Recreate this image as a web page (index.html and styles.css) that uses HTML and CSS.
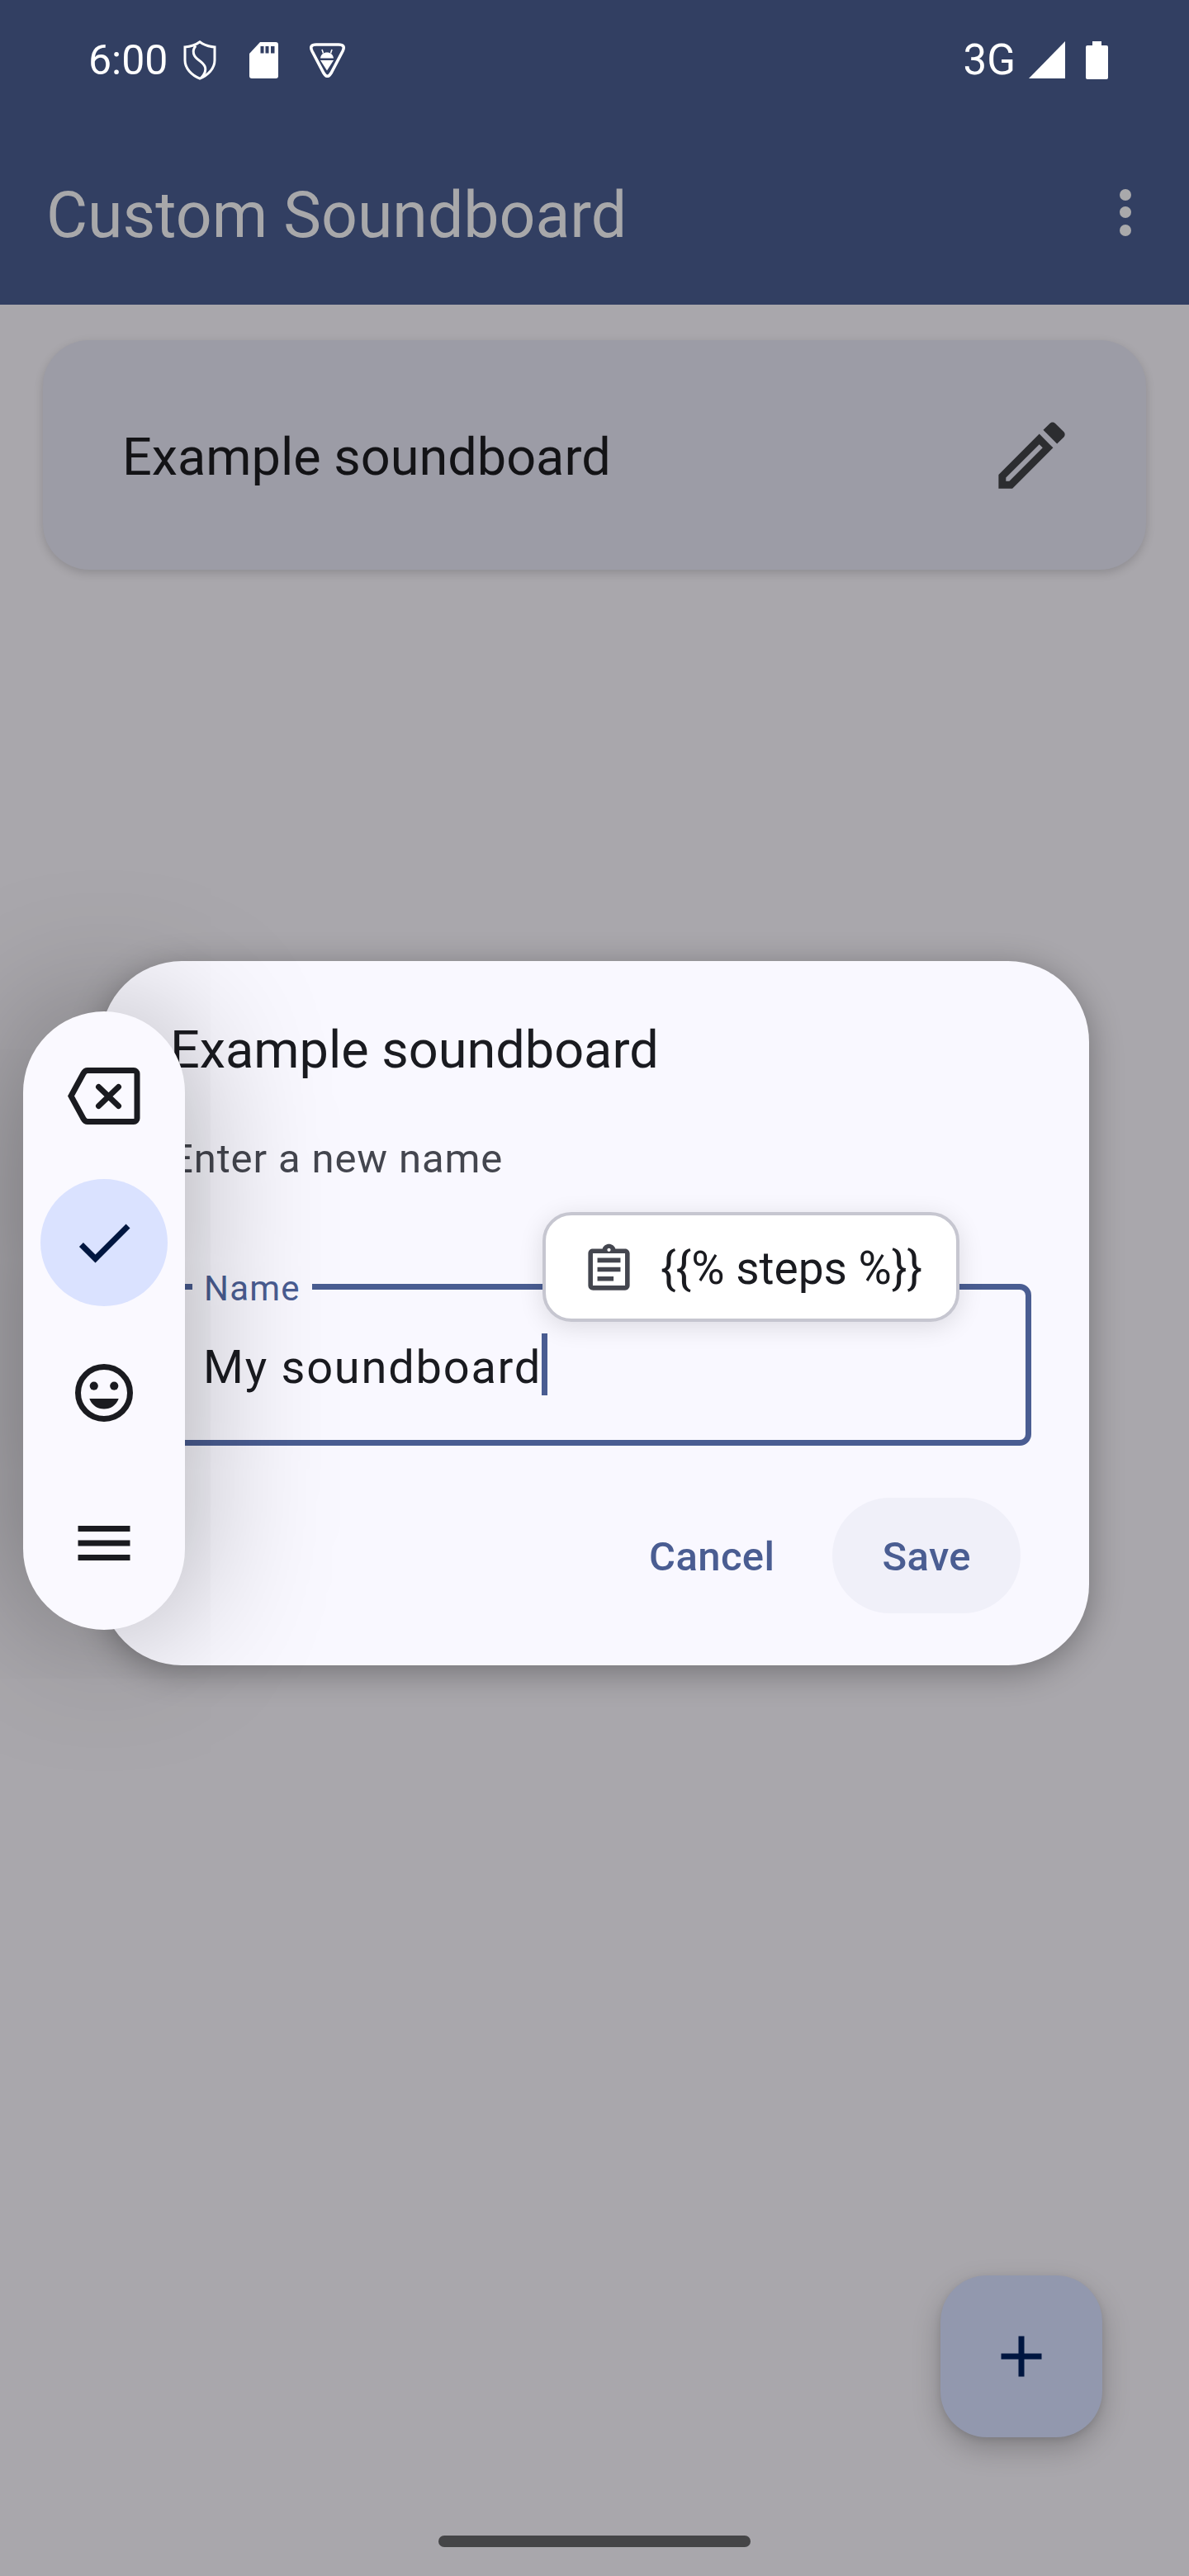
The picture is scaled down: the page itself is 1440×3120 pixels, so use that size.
FILE: index.html
```html
<!DOCTYPE html>
<html lang="en">
<head>
    <meta charset="UTF-8">
    <title>Custom Soundboard</title>
    <link rel="stylesheet" href="styles.css">
</head>
<body>
    <div class="screen">
        <!-- app bar -->
        <header class="appbar">
            <div class="status-bar">
                <span class="status-text">6:00</span>
                <svg class="status-shield" viewBox="0 0 40 48" fill="none" stroke="#fff" stroke-width="3">
                    <path d="M20 1.8 C25 5.5 31 7.5 38 8 V24 C38 34 30 42 20 46.2 C10 42 2 34 2 24 V8 C9 7.5 15 5.5 20 1.8Z"/>
                    <path d="M15 6.5 C10 13 12 19 19 24 C26 29 31 35 22 45"/>
                </svg>
                <svg class="status-sd" viewBox="0 0 35 44">
                    <path fill="#fff" d="M13 0 H32 a3 3 0 0 1 3 3 V41 a3 3 0 0 1 -3 3 H3 a3 3 0 0 1 -3 -3 V14Z"/>
                    <path fill="#323f62" d="M13.5 5 h4 v8.5 h-4z M19.5 5 h4 v8.5 h-4z M26 5 h4.5 v8.5 h-4.5z"/>
                </svg>
                <svg class="status-dev" viewBox="0 0 45 42">
                    <path fill="none" stroke="#fff" stroke-width="3.6" d="M9 2 H36 Q45 2 41 10 L27 36.5 Q22.5 44 18 36.5 L4 10 Q0 2 9 2Z"/>
                    <path fill="#fff" d="M14 18.5 C14.5 14 18 11.5 22 11.5 C26 11.5 29.5 14 30 18.5Z M14 21 H30 L22 33.5Z"/>
                    <path stroke="#fff" stroke-width="1.6" d="M17.5 12.5 L16 8 M26.5 12.5 L28 8"/>
                </svg>
                <span class="status-text status-net">3G</span>
                <svg class="status-signal" viewBox="0 0 44 45"><path fill="#fff" d="M44 0 V45 H0Z"/></svg>
                <svg class="status-battery" viewBox="0 0 27 46"><path fill="#fff" d="M8 0 H19 V5 H25 a2 2 0 0 1 2 2 V44 a2 2 0 0 1 -2 2 H2 a2 2 0 0 1 -2 -2 V7 a2 2 0 0 1 2 -2 H8Z"/></svg>
            </div>
            <div class="toolbar">
                <h1 class="toolbar-title">Custom Soundboard</h1>
                <div class="toolbar-more">
                    <span class="more-dot"></span>
                    <span class="more-dot"></span>
                    <span class="more-dot"></span>
                </div>
            </div>
        </header>

        <!-- soundboard list -->
        <main class="board-list">
            <div class="board-card">
                <span class="board-name">Example soundboard</span>
                <svg class="board-edit" viewBox="0 0 24 24"><path fill="#2c2d30" d="M14.06 9.02l.92.92L5.92 19H5v-.92l9.06-9.06M17.66 3c-.25 0-.51.1-.7.29l-1.83 1.83 3.75 3.75 1.83-1.83c.39-.39.39-1.02 0-1.41l-2.34-2.34c-.2-.2-.45-.29-.71-.29zm-3.6 3.19L3 17.25V21h3.75L17.81 9.94l-3.75-3.75z"/></svg>
            </div>
        </main>

        <button class="fab">
            <svg class="fab-icon" viewBox="0 0 24 24"><path fill="#001640" d="M19 13h-6v6h-2v-6H5v-2h6V5h2v6h6v2z"/></svg>
        </button>

        <!-- rename dialog -->
        <div class="dialog">
            <h2 class="dialog-title">Example soundboard</h2>
            <p class="dialog-text">Enter a new name</p>
            <div class="field">
                <label class="field-label">Name</label>
                <span class="field-value">My soundboard</span><span class="field-cursor"></span>
            </div>
            <div class="dialog-actions">
                <button class="text-button">Cancel</button>
                <button class="text-button text-button-hover">Save</button>
            </div>
        </div>

        <!-- clipboard suggestion -->
        <div class="clip-chip">
            <svg class="clip-icon" viewBox="0 0 24 24"><path fill="#44464f" d="M7 15h7v2H7zm0-4h10v2H7zm0-4h10v2H7zm12-4h-4.18C14.4 1.84 13.3 1 12 1c-1.3 0-2.4.84-2.82 2H5c-.14 0-.27.01-.4.04-.39.08-.74.28-1.01.55-.18.18-.33.4-.43.64-.1.23-.16.49-.16.77v14c0 .27.06.54.16.78s.25.45.43.64c.27.27.62.47 1.01.55.13.02.26.03.4.03h14c1.1 0 2-.9 2-2V5c0-1.1-.9-2-2-2zm-7-.25c.41 0 .75.34.75.75s-.34.75-.75.75-.75-.34-.75-.75.34-.75.75-.75zM19 19H5V5h14v14z"/></svg>
            <span class="clip-text">{{% steps %}}</span>
        </div>

        <!-- floating keyboard keys -->
        <div class="key-pill">
            <div class="key key-first">
                <svg class="key-back" viewBox="0 0 88 69" fill="none" stroke="#1a1b20" stroke-width="7" stroke-linecap="round">
                    <path d="M24 3.5 H80 a4 4 0 0 1 4 4 V61.5 a4 4 0 0 1 -4 4 H24 Q21 65.5 19 62 L4 34.5 L19 7 Q21 3.5 24 3.5Z"/>
                    <path d="M37.5 23.5 L61.5 46.5 M61.5 23.5 L37.5 46.5"/>
                </svg>
            </div>
            <div class="key key-active">
                <svg class="key-icon" viewBox="0 0 24 24"><path fill="#001640" d="M9 16.17L4.83 12l-1.42 1.41L9 19 21 7l-1.41-1.41z"/></svg>
            </div>
            <div class="key">
                <svg class="key-icon" viewBox="0 0 24 24">
                    <circle cx="12" cy="12" r="9" fill="none" stroke="#1a1b20" stroke-width="2"/>
                    <circle cx="8.5" cy="9.6" r="1.45" fill="#1a1b20"/>
                    <circle cx="15.5" cy="9.6" r="1.45" fill="#1a1b20"/>
                    <path fill="#1a1b20" d="M6.95 14H17.05C16.3 16.2 14.3 17.6 12 17.6S7.7 16.2 6.95 14Z"/>
                </svg>
            </div>
            <div class="key">
                <svg class="key-icon" viewBox="0 0 24 24"><path fill="#1a1b20" d="M3 18h18v-2H3v2zm0-5h18v-2H3v2zm0-7v2h18V6H3z"/></svg>
            </div>
        </div>

        <div class="home-bar"></div>
    </div>
</body>
</html>
```

FILE: styles.css
```css
* {
    margin: 0;
    padding: 0;
    box-sizing: border-box;
}

body {
    font-family: Roboto, sans-serif;
    background-color: #a9a7ac;
}

.screen {
    position: relative;
    width: 1440px;
    height: 3120px;
    overflow: hidden;
    background-color: #a9a7ac;
}

/* app bar */
.appbar {
    height: 369px;
    background-color: #323f62;
}

.status-bar {
    display: flex;
    align-items: center;
    height: 145px;
    padding: 0 98px 0 107px;
    color: #fff;
}

.status-text {
    font-size: 50px;
    line-height: 60px;
}

.status-shield {
    width: 40px;
    height: 48px;
    margin-left: 19px;
}

.status-sd {
    width: 35px;
    height: 44px;
    margin-left: 40px;
}

.status-dev {
    width: 45px;
    height: 42px;
    margin-left: 37px;
}

.status-net {
    margin-left: auto;
    font-size: 51px;
}

.status-signal {
    width: 44px;
    height: 45px;
    margin-left: 16px;
}

.status-battery {
    width: 27px;
    height: 46px;
    margin-left: 25px;
}

.toolbar {
    display: flex;
    align-items: center;
    justify-content: space-between;
    height: 224px;
    padding: 0 70px 0 56px;
}

.toolbar-title {
    padding-top: 8px;
    font-size: 77px;
    font-weight: 400;
    color: #a8a8aa;
}

.toolbar-more {
    display: flex;
    flex-direction: column;
    gap: 7.5px;
}

.more-dot {
    width: 14px;
    height: 14px;
    border-radius: 50%;
    background-color: #a9a9ab;
}

/* card */
.board-list {
    padding: 43px 52px 0;
}

.board-card {
    display: flex;
    align-items: center;
    justify-content: space-between;
    height: 278px;
    padding: 0 85px 0 96px;
    border-radius: 56px;
    background-color: #9c9ca6;
    box-shadow: 0 4px 12px rgba(0, 0, 0, 0.16);
}

.board-name {
    padding-top: 4px;
    font-size: 63px;
    color: #131316;
}

.board-edit {
    width: 107px;
    height: 107px;
}

/* add button */
.fab {
    position: absolute;
    left: 1139px;
    top: 2756px;
    display: flex;
    align-items: center;
    justify-content: center;
    width: 196px;
    height: 196px;
    border: none;
    border-radius: 56px;
    background-color: #9298ae;
    box-shadow: 0 14px 34px rgba(0, 0, 0, 0.22), 0 3px 8px rgba(0, 0, 0, 0.1);
}

.fab-icon {
    width: 84px;
    height: 84px;
}

/* dialog */
.dialog {
    position: absolute;
    left: 122px;
    top: 1164px;
    width: 1197px;
    height: 853px;
    padding-top: 68px;
    border-radius: 98px;
    background-color: #f9f8ff;
    box-shadow: 0 8px 40px rgba(0, 0, 0, 0.32);
}

.dialog-title {
    padding-left: 84px;
    font-size: 63px;
    font-weight: 400;
    line-height: 80px;
    color: #1a1b20;
}

.dialog-text {
    margin-top: 60px;
    padding-left: 84px;
    font-size: 49px;
    line-height: 64px;
    letter-spacing: 0.875px;
    color: #44464f;
}

.field {
    position: relative;
    width: 1057px;
    height: 196px;
    margin: 119px 0 0 70px;
    padding: 53px 0 0 47px;
    border: 7px solid #4a5d92;
    border-radius: 14px;
    font-size: 56px;
    line-height: 72px;
    letter-spacing: 1.75px;
    color: #1a1b20;
}

.field-label {
    position: absolute;
    left: 34px;
    top: -26px;
    padding: 0 14px;
    font-size: 42px;
    line-height: 50px;
    letter-spacing: 1.2px;
    color: #4a5d92;
    background-color: #f9f8ff;
}

.field-cursor {
    display: inline-block;
    width: 7px;
    height: 75px;
    vertical-align: -15px;
    background-color: #4a5d92;
}

.dialog-actions {
    display: flex;
    justify-content: flex-end;
    gap: 10px;
    margin-top: 63px;
    padding-right: 83px;
}

.text-button {
    height: 140px;
    padding: 3px 60px 0;
    border: none;
    border-radius: 70px;
    font-family: Roboto, sans-serif;
    font-size: 49px;
    font-weight: 500;
    letter-spacing: 0.4px;
    color: #4a5d92;
    background: none;
}

.text-button-hover {
    background-color: #f0f0f9;
}

/* clipboard chip */
.clip-chip {
    position: absolute;
    left: 657px;
    top: 1468px;
    display: flex;
    align-items: center;
    gap: 29px;
    width: 505px;
    height: 133px;
    padding-left: 43px;
    border: 4px solid #c6c6d0;
    border-radius: 35px;
    background-color: #fff;
    box-shadow: 0 6px 30px rgba(0, 0, 0, 0.12);
}

.clip-icon {
    width: 67px;
    height: 67px;
    margin-top: 6px;
}

.clip-text {
    padding-top: 3px;
    font-size: 55px;
    color: #1a1b20;
}

/* keyboard pill */
.key-pill {
    position: absolute;
    left: 28px;
    top: 1225px;
    display: flex;
    flex-direction: column;
    align-items: center;
    gap: 28px;
    width: 196px;
    height: 749px;
    padding-top: 25px;
    border-radius: 98px;
    background-color: #faf9ff;
    box-shadow: 0 0 170px rgba(0, 0, 0, 0.34);
}

.key {
    display: flex;
    align-items: center;
    justify-content: center;
    width: 154px;
    height: 154px;
    border-radius: 50%;
}

.key-first {
    margin-bottom: -4px;
}

.key-active {
    background-color: #dae2ff;
}

.key-back {
    width: 88px;
    height: 69px;
}

.key-icon {
    width: 84px;
    height: 84px;
}

.home-bar {
    position: absolute;
    left: 531px;
    top: 3071px;
    width: 378px;
    height: 14px;
    border-radius: 7px;
    background-color: #454547;
}
```
